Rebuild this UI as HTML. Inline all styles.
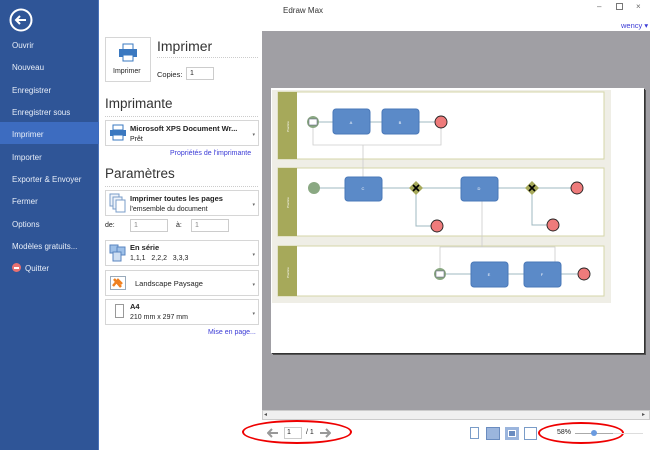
<!DOCTYPE html>
<html><head><meta charset="utf-8"><style>
*{margin:0;padding:0;box-sizing:border-box}
body{width:650px;height:450px;position:relative;overflow:hidden;background:#fff;font-family:"Liberation Sans",sans-serif;font-size:8px;color:#222}
.a{position:absolute}
#sb{left:0;top:0;width:99px;height:450px;background:#2f5597;border-right:1px solid #4a72b8}
.mi{position:absolute;left:12px;color:#e8eef8;font-size:8px}
.box{position:absolute;border:1px solid #d6d6d6;background:#fff}
.h{font-size:13.5px;color:#333}
.dash{position:absolute;border-top:1px dotted #ccc}
.b{font-weight:bold}
.dd{position:absolute;right:3px;top:45%;font-size:5px;color:#666}
.lnk{color:#3b3bd6}
.sp{position:absolute;border:1px solid #ccc;background:#fff;height:13px;font-size:7px;color:#888;padding:2px 3px}
</style></head><body>
<div class="a" style="left:0;top:0;width:650px;height:30px;background:#fff"></div>
<div class="a" style="left:283px;top:6px;font-size:8px;color:#333">Edraw Max</div>
<div class="a" style="left:597px;top:2px;font-size:8px;color:#666">–</div>
<div class="a" style="left:616px;top:3px;width:7px;height:7px;border:1px solid #777"></div>
<div class="a" style="left:636px;top:2px;font-size:8px;color:#666">×</div>
<div class="a lnk" style="left:621px;top:21px;font-size:7.5px">wency ▾</div>

<div id="sb" class="a"></div>
<svg class="a" style="left:9px;top:8px" width="24" height="24"><circle cx="12" cy="12" r="10.5" fill="none" stroke="#fff" stroke-width="2"/><path d="M17 12H7M11 8L7 12L11 16" stroke="#fff" stroke-width="2" fill="none"/></svg>
<div class="a" style="left:0;top:122px;width:99px;height:22px;background:#3d6cc0"></div>
<div class="mi" style="top:41px">Ouvrir</div>
<div class="mi" style="top:63px">Nouveau</div>
<div class="mi" style="top:86px">Enregistrer</div>
<div class="mi" style="top:108px">Enregistrer sous</div>
<div class="mi" style="top:130px">Imprimer</div>
<div class="mi" style="top:153px">Importer</div>
<div class="mi" style="top:175px">Exporter &amp; Envoyer</div>
<div class="mi" style="top:197px">Fermer</div>
<div class="mi" style="top:220px">Options</div>
<div class="mi" style="top:242px">Modèles gratuits...</div>
<div class="a" style="left:12px;top:263px;width:9px;height:9px;border-radius:50%;background:#e87070"><div style="margin:3.5px 2px;height:2px;background:#fff"></div></div>
<div class="mi" style="left:25px;top:264px">Quitter</div>

<div class="box" style="left:105px;top:37px;width:46px;height:45px"></div>
<svg class="a" style="left:117px;top:42px" width="22" height="22"><rect x="6" y="2" width="10" height="6" fill="#fff" stroke="#3a78c0"/><rect x="2" y="7" width="18" height="8" fill="#3a78c0"/><rect x="6" y="13" width="10" height="6" fill="#fff" stroke="#3a78c0"/></svg>
<div class="a" style="left:113px;top:68px;font-size:7px">Imprimer</div>
<div class="a h" style="left:157px;top:38px;font-size:14px">Imprimer</div>
<div class="dash" style="left:157px;top:57px;width:101px"></div>
<div class="a" style="left:157px;top:70px;font-size:7.5px">Copies:</div>
<div class="sp" style="left:186px;top:67px;width:28px;color:#222">1</div>
<div class="a h" style="left:105px;top:96px">Imprimante</div>
<div class="dash" style="left:105px;top:116px;width:153px"></div>
<div class="box" style="left:105px;top:120px;width:154px;height:26px"><div class="dd">▾</div></div>
<svg class="a" style="left:109px;top:124px" width="18" height="18"><rect x="4" y="1" width="10" height="5" fill="#fff" stroke="#3a78c0"/><rect x="1" y="6" width="16" height="6" fill="#3a78c0"/><rect x="4" y="11" width="10" height="5" fill="#fff" stroke="#3a78c0"/></svg>
<div class="a b" style="left:130px;top:124px;font-size:7.5px">Microsoft XPS Document Wr...</div>
<div class="a" style="left:130px;top:136px;font-size:7px">Prêt</div>
<div class="a lnk" style="left:170px;top:150px;font-size:7px">Propriétés de l'imprimante</div>
<div class="a h" style="left:105px;top:166px">Paramètres</div>
<div class="dash" style="left:105px;top:186px;width:153px"></div>
<div class="box" style="left:105px;top:190px;width:154px;height:26px"><div class="dd">▾</div></div>
<svg class="a" style="left:108px;top:193px" width="20" height="20"><rect x="2" y="1" width="9" height="12" fill="#eef3fa" stroke="#7a9cc8"/><rect x="5" y="4" width="9" height="12" fill="#eef3fa" stroke="#7a9cc8"/><rect x="8" y="7" width="9" height="12" fill="#fff" stroke="#7a9cc8"/></svg>
<div class="a b" style="left:130px;top:194px;font-size:7.5px">Imprimer toutes les pages</div>
<div class="a" style="left:130px;top:206px;font-size:7px">l'emsemble du document</div>
<div class="a" style="left:105px;top:222px;font-size:7px">de:</div>
<div class="sp" style="left:130px;top:219px;width:38px">1</div>
<div class="a" style="left:176px;top:222px;font-size:7px">à:</div>
<div class="sp" style="left:191px;top:219px;width:38px">1</div>
<div class="box" style="left:105px;top:240px;width:154px;height:26px"><div class="dd">▾</div></div>
<svg class="a" style="left:109px;top:244px" width="18" height="18"><rect x="1" y="1" width="8" height="8" fill="#9ec0e8" stroke="#5a86c0"/><rect x="8" y="3" width="8" height="8" fill="#9ec0e8" stroke="#5a86c0"/><rect x="4" y="8" width="8" height="9" fill="#cfdff2" stroke="#5a86c0"/></svg>
<div class="a b" style="left:130px;top:243px;font-size:7.5px">En série</div>
<div class="a" style="left:130px;top:255px;font-size:7px">1,1,1 &nbsp; 2,2,2 &nbsp; 3,3,3</div>
<div class="box" style="left:105px;top:270px;width:154px;height:26px"><div class="dd">▾</div></div>
<svg class="a" style="left:110px;top:276px" width="16" height="14"><rect x="0.5" y="0.5" width="15" height="13" fill="#fff" stroke="#9ab"/><path d="M3 10 L8 4 L12 8 M4 3 L11 11" stroke="#f08020" stroke-width="2.5" fill="none"/></svg>
<div class="a" style="left:135px;top:279px;font-size:7.5px">Landscape Paysage</div>
<div class="box" style="left:105px;top:299px;width:154px;height:26px"><div class="dd">▾</div></div>
<div class="a" style="left:115px;top:304px;width:9px;height:14px;border:1px solid #999"></div>
<div class="a b" style="left:130px;top:302px;font-size:7.5px">A4</div>
<div class="a" style="left:130px;top:314px;font-size:7px">210 mm x 297 mm</div>
<div class="a lnk" style="left:208px;top:329px;font-size:7px">Mise en page...</div>

<div class="a" style="left:262px;top:31px;width:388px;height:379px;background:#a09fa4"></div>
<div class="a" style="left:271px;top:88px;width:373px;height:265px;background:#fff;box-shadow:1px 1px 0 #333,2px 2px 0 #555"></div>
<svg class="a" style="left:272px;top:90px" width="340" height="214" viewBox="272 90 340 214">
<rect x="272" y="90" width="339" height="213" fill="#efeee6"/>
<g stroke="#d4d6a8" fill="#fff"><rect x="278" y="92" width="326" height="67"/><rect x="278" y="168" width="326" height="68"/><rect x="278" y="246" width="326" height="50"/></g>
<g fill="#a6a95a"><rect x="278" y="92" width="19" height="67"/><rect x="278" y="168" width="19" height="68"/><rect x="278" y="246" width="19" height="50"/></g>
<g fill="none" stroke="#9fb8c0" stroke-width="1"><path d="M319 122H333M370 122H382M419 122H435M320 188H345M382 188H410M422 188H461M498 188H526M538 188H571M416 194V226H431M532 194V225H547M446 274H471M508 274H524M561 274H578"/></g>
<g fill="none" stroke="#ccc" stroke-width="0.8"><path d="M313 128V145H441V128M363 145V177M440 268V247H480M480 247H483M482 236V247M482 247H555V262M482 247V201"/></g>
<g fill="#5b8ac8" stroke="#4a78b8"><rect x="333" y="109" width="37" height="25" rx="3"/><rect x="382" y="109" width="37" height="25" rx="3"/><rect x="345" y="177" width="37" height="24" rx="3"/><rect x="461" y="177" width="37" height="24" rx="3"/><rect x="471" y="262" width="37" height="25" rx="3"/><rect x="524" y="262" width="37" height="25" rx="3"/></g>
<g fill="#fff" font-size="4" font-family="Liberation Sans" text-anchor="middle"><text x="351" y="124">A</text><text x="400" y="124">B</text><text x="363" y="190">C</text><text x="479" y="190">D</text><text x="489" y="276">E</text><text x="542" y="276">F</text></g>
<g fill="#ee7b7b" stroke="#222" stroke-width="0.9"><circle cx="441" cy="122" r="6"/><circle cx="577" cy="188" r="6"/><circle cx="437" cy="226" r="6"/><circle cx="553" cy="225" r="6"/><circle cx="584" cy="274" r="6"/></g>
<g fill="#8aa882"><circle cx="313" cy="122" r="6"/><circle cx="314" cy="188" r="6"/><circle cx="440" cy="274" r="6"/></g>
<g fill="#fff" stroke="#557"><rect x="309" y="119" width="8" height="6" stroke-width="0.5"/><rect x="436" y="271" width="8" height="6" stroke-width="0.5"/></g>
<g fill="#a6a95a"><path d="M416 181L423 188L416 195L409 188Z"/><path d="M532 181L539 188L532 195L525 188Z"/></g>
<g stroke="#000" stroke-width="1.6"><path d="M413 185L419 191M419 185L413 191M529 185L535 191M535 185L529 191"/></g>
<g fill="#fff" font-size="3" font-family="Liberation Sans"><text transform="translate(289 132) rotate(-90)">Practice</text><text transform="translate(289 208) rotate(-90)">Practice</text><text transform="translate(289 278) rotate(-90)">Practice</text></g>
</svg>
<div class="a" style="left:262px;top:410px;width:388px;height:10px;background:#f0f0f0;border:1px solid #ccc"></div>
<div class="a" style="left:264px;top:411px;font-size:6px;color:#555">◂</div>
<div class="a" style="left:642px;top:411px;font-size:6px;color:#555">▸</div>

<div class="a" style="left:242px;top:420px;width:110px;height:24px;border:2px solid #e00;border-radius:50%"></div>
<svg class="a" style="left:267px;top:428px" width="12" height="10"><path d="M11 5H2M5 1L1 5L5 9" stroke="#999" stroke-width="2" fill="none"/></svg>
<div class="a" style="left:284px;top:427px;width:18px;height:12px;border:1px solid #ccc;font-size:7px;padding:1px 2px">1</div>
<div class="a" style="left:306px;top:429px;font-size:7px">/ 1</div>
<svg class="a" style="left:319px;top:428px" width="12" height="10"><path d="M1 5H10M7 1L11 5L7 9" stroke="#999" stroke-width="2" fill="none"/></svg>
<div class="a" style="left:470px;top:427px;width:9px;height:12px;border:1px solid #7a9cc8"></div>
<div class="a" style="left:486px;top:427px;width:14px;height:13px;background:#9bb5dd;border:1px solid #6a8cc0"></div>
<div class="a" style="left:505px;top:427px;width:14px;height:13px;background:#9bb5dd"><div style="margin:3px;height:7px;border:1px solid #fff;background:#6a8cc0"></div></div>
<div class="a" style="left:524px;top:427px;width:13px;height:13px;border:1px solid #7a9cc8"></div>
<div class="a" style="left:538px;top:422px;width:86px;height:22px;border:2px solid #e00;border-radius:50%"></div>
<div class="a" style="left:557px;top:429px;font-size:7px">58%</div>
<div class="a" style="left:575px;top:433px;width:38px;height:1px;background:#aaa"></div>
<div class="a" style="left:591px;top:430px;width:6px;height:6px;border-radius:50%;background:#6a9be0"></div>
<div class="a" style="left:613px;top:433px;width:30px;height:1px;background:#ddd"></div>
</body></html>
